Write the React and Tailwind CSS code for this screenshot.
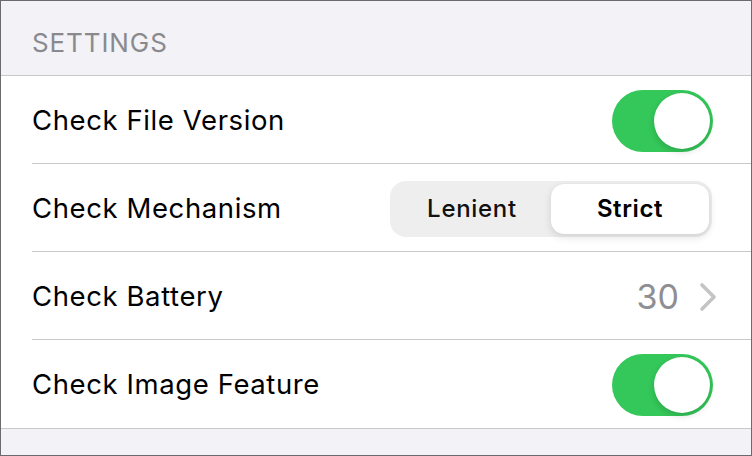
import React from "react";

function Toggle() {
  return (
    <div className="relative w-[101px] h-[62px] rounded-full bg-[#34c759] mt-[2px]">
      <div className="absolute right-[3px] top-[3px] w-[56px] h-[56px] rounded-full bg-white shadow-[0_3px_6px_rgba(0,0,0,0.15),0_0_1px_rgba(0,0,0,0.1)]" />
    </div>
  );
}

function Row({ label, children, last }) {
  return (
    <div className="pl-[31px] bg-white">
      <div className={`h-[88px] flex items-center justify-between pr-[38px] ${last ? "" : "border-b border-[#c8c7cc]"}`}>
        <span className="text-[27.5px] text-black tracking-[0.6px] pt-[2px]">{label}</span>
        {children}
      </div>
    </div>
  );
}

export default function App() {
  return (
    <div
      className="w-[752px] h-[456px] bg-[#f2f2f7] border border-[#6b6b6b] flex flex-col overflow-hidden"
      style={{ fontFamily: "Inter, 'Noto Sans', sans-serif" }}
    >
      <div className="h-[75px] flex items-center pl-[31px] border-b border-[#c8c7cc]">
        <span className="text-[26px] text-[#8a8a8e] tracking-[0.9px] pt-[8px]">SETTINGS</span>
      </div>
      <Row label="Check File Version">
        <Toggle />
      </Row>
      <Row label="Check Mechanism">
        <div className="w-[322px] h-[56px] rounded-[16px] bg-[#eeeeef] flex p-[3px] mr-[1px] mt-[2px]">
          <div className="flex-1 flex items-center justify-center text-[24px] font-medium text-[#111] tracking-[0.7px]">Lenient</div>
          <div className="flex-1 flex items-center justify-center text-[24px] font-semibold text-black tracking-[0.6px] bg-white rounded-[13px] shadow-[0_3px_8px_rgba(0,0,0,0.12),0_0_1px_rgba(0,0,0,0.1)]">Strict</div>
        </div>
      </Row>
      <Row label="Check Battery">
        <div className="flex items-center gap-[20px] -mr-[4px] pt-[2px]">
          <span className="text-[34px] text-[#8e8e93]">30</span>
          <svg width="18" height="30" viewBox="0 0 18 30" fill="none">
            <path d="M3 3 L15 15 L3 27" stroke="#c4c4c7" strokeWidth="3.6" strokeLinecap="round" strokeLinejoin="round" />
          </svg>
        </div>
      </Row>
      <div className="border-b border-[#c8c7cc]">
        <Row label="Check Image Feature" last>
          <Toggle />
        </Row>
      </div>
    </div>
  );
}
